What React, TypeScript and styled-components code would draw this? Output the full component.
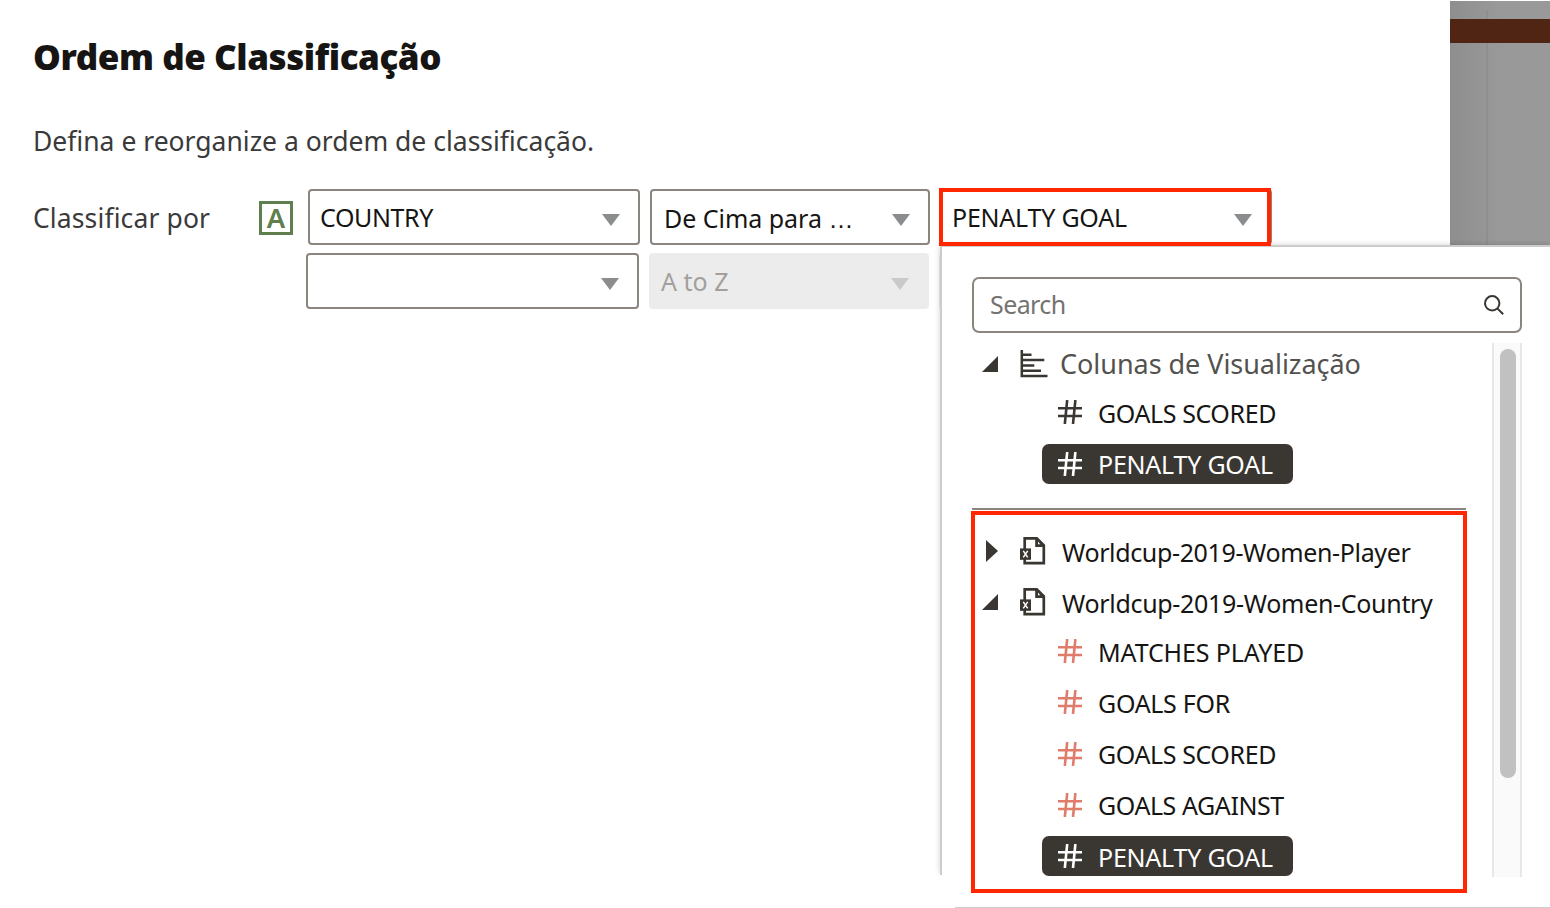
import React from "react";
import styled, { createGlobalStyle } from "styled-components";

const GlobalStyle = createGlobalStyle`
  * { box-sizing: border-box; }
  body {
    margin: 0;
    background: #fff;
    font-family: "Noto Sans", "Open Sans", sans-serif;
    color: #161513;
    overflow: hidden;
  }
`;

const Page = styled.div`
  position: relative;
  display: flex;
  width: 1550px;
  height: 908px;
  overflow: hidden;
  background: #fff;
`;

const Dialog = styled.main`
  width: 1450px;
  padding: 33px 0 0 33px;
`;

const Title = styled.h1`
  margin: 0;
  font-size: 35px;
  line-height: 48px;
  font-weight: 900;
  letter-spacing: -0.45px;
  white-space: nowrap;
`;

const Description = styled.p`
  margin: 42px 0 0;
  font-size: 26.5px;
  line-height: 36px;
  color: #3a3a3a;
  white-space: nowrap;
`;

const SortRow = styled.div<{ $first?: boolean }>`
  display: flex;
  align-items: center;
  height: 56px;
  gap: 10px;
  margin-top: ${(p) => (p.$first ? 30 : 8)}px;
  padding-left: ${(p) => (p.$first ? 0 : 273)}px;
`;

const SortLabel = styled.span`
  width: 216px;
  padding-top: 2px;
  font-size: 26.5px;
  letter-spacing: 0.12px;
  color: #3a3a3a;
  white-space: nowrap;
`;

const AttributeIcon = styled.span`
  display: flex;
  align-items: center;
  justify-content: center;
  width: 34px;
  height: 34px;
  margin: 2px 5px 0 0;
  border: 3px solid #5f7f4f;
  color: #5f7f4f;
  font-size: 27.5px;
  font-weight: 600;
  line-height: 26px;
`;

const Select = styled.div<{ $width: number; $disabled?: boolean; $inset?: number; $tracking?: number }>`
  display: flex;
  align-items: center;
  justify-content: space-between;
  flex: none;
  width: ${(p) => p.$width}px;
  height: 56px;
  padding: 0 18px 0 ${(p) => p.$inset ?? 10}px;
  border: 2px solid ${(p) => (p.$disabled ? "#ececec" : "#8b8580")};
  border-radius: 4px;
  background: ${(p) => (p.$disabled ? "#ececec" : "#fff")};
  color: ${(p) => (p.$disabled ? "#a3a09c" : "#161513")};
  font-size: 25px;
  letter-spacing: ${(p) => p.$tracking ?? 0}px;
  white-space: nowrap;
`;

const SelectText = styled.span<{ $drop?: number }>`
  padding-top: ${(p) => p.$drop ?? 0}px;
`;

const Ellipsis = styled.span`
  font-family: "Liberation Sans", sans-serif;
  line-height: 1;
`;

const Arrow = styled.span<{ $disabled?: boolean }>`
  margin-top: 5px;
  border: 9px solid transparent;
  border-top: 12px solid ${(p) => (p.$disabled ? "#c9cacb" : "#8b8c8e")};
  border-bottom: 0;
`;

const Highlight = styled.div`
  position: relative;
  &::after {
    content: "";
    position: absolute;
    z-index: 2;
    inset: -1px 1px -1px -1px;
    border: 4px solid #ff2600;
  }
`;

const Backdrop = styled.aside`
  width: 100px;
  height: 244px;
  margin-top: 1px;
  padding-top: 18px;
  background:
    linear-gradient(#8888, #8888) 36px 9px / 2px 100% no-repeat,
    linear-gradient(90deg, #8e8e8e, #999 50px);
`;

const BackdropBand = styled.div`
  height: 24px;
  background: #502514;
`;

const Popup = styled.section`
  position: absolute;
  left: 940px;
  top: 245px;
  width: 610px;
  height: 663px;
  padding: 32px 28px 0 32px;
  background:
    linear-gradient(#ccc, #ccc) 0 0 / 100% 2px no-repeat,
    linear-gradient(#ccc, #ccc) 0 0 / 2px 630px no-repeat,
    linear-gradient(#ccc, #ccc) 15px 100% / 595px 1px no-repeat,
    #fff;
  &::before {
    content: "";
    position: absolute;
    z-index: -1;
    inset: 0 0 35px 0;
    box-shadow: 0 0 6px rgba(0, 0, 0, 0.18);
  }
`;

const PopupLayer = styled.div`
  position: absolute;
  inset: 0;
  z-index: 1;
  pointer-events: none;
`;

const SearchField = styled.div`
  display: flex;
  align-items: center;
  justify-content: space-between;
  height: 56px;
  padding: 0 16px;
  border: 2px solid #8b8580;
  border-radius: 7px;
  color: #75736f;
  font-size: 25px;
  letter-spacing: -0.6px;
`;

const SearchText = styled.span`
  padding-bottom: 2px;
`;

const PopupBody = styled.div`
  display: flex;
  justify-content: space-between;
  margin-top: 10px;
`;

const Tree = styled.div`
  width: 495px;
`;

const Divider = styled.div`
  height: 2px;
  margin: 19px 1px 1px 0;
  background: #8b8580;
`;

const DatasetGroup = styled.div`
  width: 496px;
  height: 382px;
  margin-left: -1px;
  padding-top: 10px;
  border: 4px solid #ff2600;
`;

const Node = styled.div<{ $height: number; $left: number }>`
  display: flex;
  align-items: center;
  height: ${(p) => p.$height}px;
  padding-left: ${(p) => p.$left}px;
`;

const IconSlot = styled.span<{ $width: number }>`
  display: flex;
  flex: none;
  width: ${(p) => p.$width}px;
`;

const NodeText = styled.span<{ $size?: number; $tracking?: number; $soft?: boolean; $shift?: number }>`
  padding-top: ${(p) => p.$shift ?? 2}px;
  font-size: ${(p) => p.$size ?? 25}px;
  line-height: 34px;
  letter-spacing: ${(p) => p.$tracking ?? 0}px;
  color: ${(p) => (p.$soft ? "#53524f" : "inherit")};
  white-space: nowrap;
`;

const Leaf = styled.div<{ $selected?: boolean; $tone: string }>`
  display: flex;
  align-items: center;
  width: 251px;
  height: 40px;
  padding-left: 16px;
  border-radius: 7px;
  background: ${(p) => (p.$selected ? "#3a3631" : "transparent")};
  color: ${(p) => (p.$selected ? "#fff" : "#161513")};
  svg {
    color: ${(p) => p.$tone};
  }
`;

const ScrollTrack = styled.div`
  width: 30px;
  height: 534px;
  padding: 6px 0 0 6px;
  border: solid #e8e8e8;
  border-width: 0 2px;
  background: #fafafa;
`;

const ScrollThumb = styled.div`
  width: 16px;
  height: 429px;
  border-radius: 8px;
  background: #c1c1c1;
`;

const HashIcon = () => (
  <svg width="24" height="24" viewBox="0 0 24 24" fill="none" stroke="currentColor" strokeWidth="2.6">
    <path d="M0 8.3H24M0 16H24M9.2 0L6.8 24M17.4 0L15 24" />
  </svg>
);

const ExpandedIcon = () => (
  <svg width="16" height="16" viewBox="0 0 16 16">
    <path d="M16 0V16H0Z" fill="#3a3631" />
  </svg>
);

const CollapsedIcon = () => (
  <svg width="16" height="22" viewBox="0 0 16 22">
    <path d="M4 0L16 11L4 22Z" fill="#3a3631" />
  </svg>
);

const ChartIcon = () => (
  <svg width="28" height="28" viewBox="0 0 28 28" fill="none" stroke="#3a3631" strokeWidth="2.5">
    <path d="M1.8 0V26H27.5M1.8 4.8H11.5M1.8 10H24.3M1.8 15.4H14.3M1.8 20.8H21" />
  </svg>
);

const FileIcon = () => (
  <svg width="26" height="28" viewBox="0.6 0 26 28" fill="none">
    <path d="M5.3 12V1.3H17.3L24.4 8.4V26.2H5.3V22" stroke="#3a3631" strokeWidth="2.7" />
    <path d="M15.8 1V10H24V7.5L17.8 1Z" fill="#3a3631" />
    <path d="M18.6 4.6L20.8 7.2H18.6Z" fill="#fff" />
    <rect x="0.6" y="11.4" width="11" height="11.4" fill="#3a3631" />
    <path d="M3.9 13.8L8.3 20.4M8.3 13.8L3.9 20.4" stroke="#fff" strokeWidth="1.5" />
  </svg>
);

const SearchIcon = () => (
  <svg width="20" height="21" viewBox="0 0 20 21" fill="none" stroke="#3a3631" strokeWidth="2">
    <circle cx="8.2" cy="8.3" r="7.2" />
    <path d="M13.3 13.4L19.2 19.2" />
  </svg>
);

const INK = "#3a3631";
const CORAL = "#df7c6a";

type LeafData = { name: string; tracking: number; height: number; selected?: boolean; shift?: number };

const LeafNode = ({ item, left, tone }: { item: LeafData; left: number; tone: string }) => (
  <Node $height={item.height} $left={left}>
    <Leaf $selected={item.selected} $tone={item.selected ? "#fff" : tone}>
      <IconSlot $width={40}>
        <HashIcon />
      </IconSlot>
      <NodeText $tracking={item.tracking} $shift={item.shift}>
        {item.name}
      </NodeText>
    </Leaf>
  </Node>
);

const visualizationColumns: LeafData[] = [
  { name: "GOALS SCORED", tracking: -0.4, height: 54 },
  { name: "PENALTY GOAL", tracking: -0.22, height: 50, selected: true, shift: 0 },
];

const countryColumns: LeafData[] = [
  { name: "MATCHES PLAYED", tracking: -0.12, height: 48 },
  { name: "GOALS FOR", tracking: -0.3, height: 54 },
  { name: "GOALS SCORED", tracking: -0.4, height: 50, shift: 0 },
  { name: "GOALS AGAINST", tracking: -0.42, height: 52, shift: 0 },
  { name: "PENALTY GOAL", tracking: -0.22, height: 50, selected: true },
];

export default function App() {
  return (
    <Page>
      <GlobalStyle />
      <Dialog>
        <Title>Ordem de Classificação</Title>
        <Description>Defina e reorganize a ordem de classificação.</Description>
        <SortRow $first>
          <SortLabel>Classificar por</SortLabel>
          <AttributeIcon>A</AttributeIcon>
          <Select $width={332} $tracking={-0.4}>
            <SelectText>COUNTRY</SelectText>
            <Arrow />
          </Select>
          <Select $width={280} $inset={12} $tracking={-0.03}>
            <SelectText $drop={2}>
              De Cima para <Ellipsis>…</Ellipsis>
            </SelectText>
            <Arrow />
          </Select>
          <Highlight>
            <Select $width={332} $tracking={-0.22}>
              <SelectText>PENALTY GOAL</SelectText>
              <Arrow />
            </Select>
          </Highlight>
        </SortRow>
        <SortRow>
          <Select $width={333}>
            <SelectText />
            <Arrow />
          </Select>
          <Select $width={280} $disabled>
            <SelectText>A to Z</SelectText>
            <Arrow $disabled />
          </Select>
          <Select $width={332} $disabled />
        </SortRow>
      </Dialog>
      <Backdrop>
        <BackdropBand />
      </Backdrop>
      <PopupLayer>
        <Popup>
          <SearchField>
            <SearchText>Search</SearchText>
            <SearchIcon />
          </SearchField>
          <PopupBody>
            <Tree>
              <Node $height={42} $left={10}>
                <IconSlot $width={38}>
                  <ExpandedIcon />
                </IconSlot>
                <IconSlot $width={40}>
                  <ChartIcon />
                </IconSlot>
                <NodeText $size={27} $tracking={-0.04} $soft $shift={0}>
                  Colunas de Visualização
                </NodeText>
              </Node>
              {visualizationColumns.map((item) => (
                <LeafNode key={item.name} item={item} left={70} tone={INK} />
              ))}
              <Divider />
              <DatasetGroup>
                <Node $height={52} $left={7}>
                  <IconSlot $width={38}>
                    <CollapsedIcon />
                  </IconSlot>
                  <IconSlot $width={42}>
                    <FileIcon />
                  </IconSlot>
                  <NodeText $tracking={-0.36}>Worldcup-2019-Women-Player</NodeText>
                </Node>
                <Node $height={50} $left={7}>
                  <IconSlot $width={38}>
                    <ExpandedIcon />
                  </IconSlot>
                  <IconSlot $width={42}>
                    <FileIcon />
                  </IconSlot>
                  <NodeText $tracking={-0.31}>Worldcup-2019-Women-Country</NodeText>
                </Node>
                {countryColumns.map((item) => (
                  <LeafNode key={item.name} item={item} left={67} tone={CORAL} />
                ))}
              </DatasetGroup>
            </Tree>
            <ScrollTrack>
              <ScrollThumb />
            </ScrollTrack>
          </PopupBody>
        </Popup>
      </PopupLayer>
    </Page>
  );
}
